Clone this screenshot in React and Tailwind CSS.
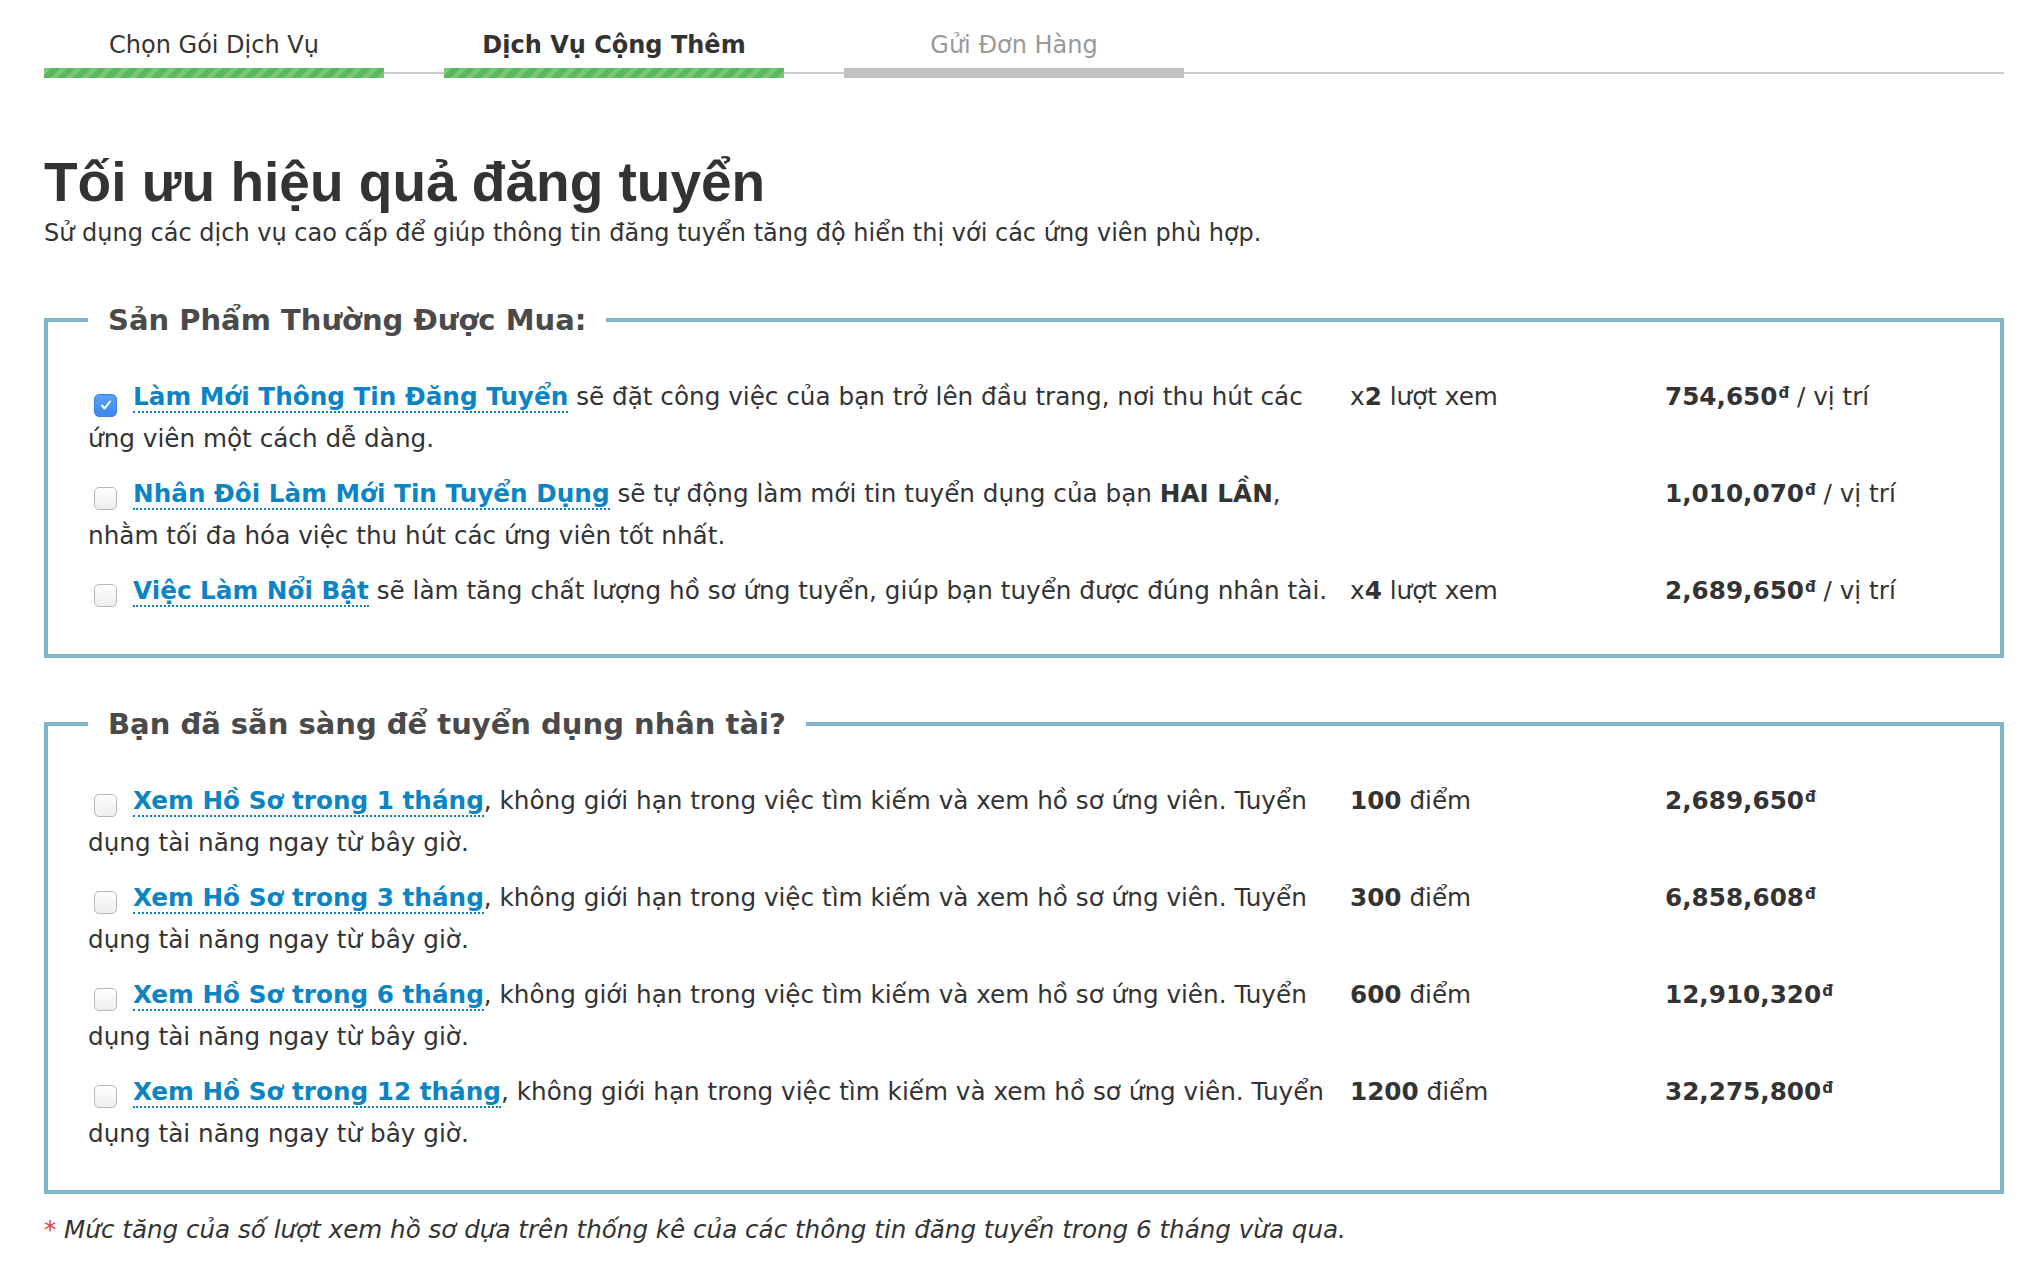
import { useState } from "react";

const steps = [
  { label: "Chọn Gói Dịch Vụ", state: "done" },
  { label: "Dịch Vụ Cộng Thêm", state: "current" },
  { label: "Gửi Đơn Hàng", state: "todo" },
];

const popular = [
  {
    id: "refresh",
    title: "Làm Mới Thông Tin Đăng Tuyển",
    text: (
      <> sẽ đặt công việc của bạn trở lên đầu trang, nơi thu hút các ứng viên một cách dễ dàng.</>
    ),
    views: "2",
    price: "754,650",
    unit: true,
  },
  {
    id: "double",
    title: "Nhân Đôi Làm Mới Tin Tuyển Dụng",
    text: (
      <>
        {" "}sẽ tự động làm mới tin tuyển dụng của bạn <b className="font-bold">HAI LẦN</b>, nhằm tối đa hóa việc thu hút các ứng viên tốt nhất.
      </>
    ),
    views: null,
    price: "1,010,070",
    unit: true,
  },
  {
    id: "hot",
    title: "Việc Làm Nổi Bật",
    text: <> sẽ làm tăng chất lượng hồ sơ ứng tuyển, giúp bạn tuyển được đúng nhân tài.</>,
    views: "4",
    price: "2,689,650",
    unit: true,
  },
];

const resume = [
  { id: "r1", months: 1, points: "100", price: "2,689,650" },
  { id: "r3", months: 3, points: "300", price: "6,858,608" },
  { id: "r6", months: 6, points: "600", price: "12,910,320" },
  { id: "r12", months: 12, points: "1200", price: "32,275,800" },
];

const Checkbox = ({ checked, onChange }) => (
  <button
    type="button"
    onClick={onChange}
    className={`inline-flex items-center justify-center w-[23px] h-[23px] rounded-[5px] ml-[6px] mr-[16px] align-[-7px] ${
      checked
        ? "bg-[linear-gradient(#5aa2f7,#3b86ee)] border border-[#3a82e6]"
        : "bg-[linear-gradient(#ffffff,#ededed)] border border-[#b8b8b8]"
    }`}
  >
    {checked && (
      <svg width="14" height="14" viewBox="0 0 14 14" fill="none">
        <path d="M3 7.5l2.6 3L11 3.5" stroke="#fff" strokeWidth="2" strokeLinecap="round" strokeLinejoin="round" />
      </svg>
    )}
  </button>
);

const Title = ({ children }) => (
  <a href="#" className="font-bold text-[#0b84c4] border-b-2 border-dotted border-[#0b84c4]">
    {children}
  </a>
);

const Price = ({ value, unit }) => (
  <span>
    <b className="font-bold">{value}</b>
    <sup className="font-bold text-[15px] ml-[1px]">đ</sup>
    {unit && " / vị trí"}
  </span>
);

const Row = ({ checked, onToggle, title, text, middle, price, unit }) => (
  <div className="grid grid-cols-[1262px_315px_1fr] mb-[13px] last:mb-0 text-[24.7px]">
    <p className="pr-[12px]">
      <Checkbox checked={checked} onChange={onToggle} />
      <Title>{title}</Title>
      {text}
    </p>
    <div>{middle}</div>
    <div>
      <Price value={price} unit={unit} />
    </div>
  </div>
);

const Box = ({ legend, children, last }) => (
  <fieldset className={`border-4 border-[#80b3cc] pl-[40px] pr-[20px] pt-[38px] ${last ? "pb-[35px]" : "pb-[42px]"}`}>
    <legend className="px-[20px] font-bold text-[29px] leading-[36px] text-[#4a4a4a]">{legend}</legend>
    {children}
  </fieldset>
);

const App = () => {
  const [selected, setSelected] = useState(["refresh"]);

  const toggle = (id) =>
    setSelected((prev) => (prev.includes(id) ? prev.filter((s) => s !== id) : [...prev, id]));

  return (
    <div className="min-h-screen bg-white pl-[44px] pr-[37px] pt-[30px] text-[#333] text-[24px] leading-[42px] font-['DejaVu_Sans',sans-serif]">
      {/* steps */}
      <div className="flex gap-[60px]">
        {steps.map((s) => (
          <div
            key={s.label}
            className={`w-[340px] text-center text-[24px] leading-[30px] ${
              s.state === "current" ? "font-bold text-[#333]" : s.state === "done" ? "text-[#333]" : "text-[#999]"
            }`}
          >
            {s.label}
          </div>
        ))}
      </div>
      <div className="flex items-center mt-[8px]">
        <div className="w-[340px] h-[10px] bg-[#5cb85c] bg-[repeating-linear-gradient(-45deg,rgba(255,255,255,0.18)_0_5px,transparent_5px_11px)]" />
        <div className="w-[60px] h-[2px] bg-[#cccccc]" />
        <div className="w-[340px] h-[10px] bg-[#5cb85c] bg-[repeating-linear-gradient(-45deg,rgba(255,255,255,0.18)_0_5px,transparent_5px_11px)]" />
        <div className="w-[60px] h-[2px] bg-[#cccccc]" />
        <div className="w-[340px] h-[10px] bg-[#c0c0c0]" />
        <div className="flex-1 h-[2px] bg-[#cccccc]" />
      </div>

      {/* header */}
      <h1 className="mt-[72px] font-['Liberation_Sans',Arial,sans-serif] font-bold text-[55px] leading-[65px] text-[#333]">
        Tối ưu hiệu quả đăng tuyển
      </h1>
      <p className="mt-[3px] leading-[30px]">
        Sử dụng các dịch vụ cao cấp để giúp thông tin đăng tuyển tăng độ hiển thị với các ứng viên phù hợp.
      </p>

      <div className="mt-[54px]">
        <Box legend="Sản Phẩm Thường Được Mua:">
          {popular.map((p) => (
            <Row
              key={p.id}
              checked={selected.includes(p.id)}
              onToggle={() => toggle(p.id)}
              title={p.title}
              text={p.text}
              middle={
                p.views && (
                  <>
                    x<b className="font-bold">{p.views}</b> lượt xem
                  </>
                )
              }
              price={p.price}
              unit={p.unit}
            />
          ))}
        </Box>
      </div>

      <div className="mt-[48px]">
        <Box legend="Bạn đã sẵn sàng để tuyển dụng nhân tài?" last>
          {resume.map((r) => (
            <Row
              key={r.id}
              checked={selected.includes(r.id)}
              onToggle={() => toggle(r.id)}
              title={`Xem Hồ Sơ trong ${r.months} tháng`}
              text={<>, không giới hạn trong việc tìm kiếm và xem hồ sơ ứng viên. Tuyển dụng tài năng ngay từ bây giờ.</>}
              middle={
                <>
                  <b className="font-bold">{r.points}</b> điểm
                </>
              }
              price={r.price}
            />
          ))}
        </Box>
      </div>

      <p className="mt-[15px] italic text-[24.6px]">
        <span className="not-italic text-[#e03c3c]">*</span> Mức tăng của số lượt xem hồ sơ dựa trên thống kê của các thông tin đăng tuyển trong 6 tháng vừa qua.
      </p>
    </div>
  );
};

export default App;
